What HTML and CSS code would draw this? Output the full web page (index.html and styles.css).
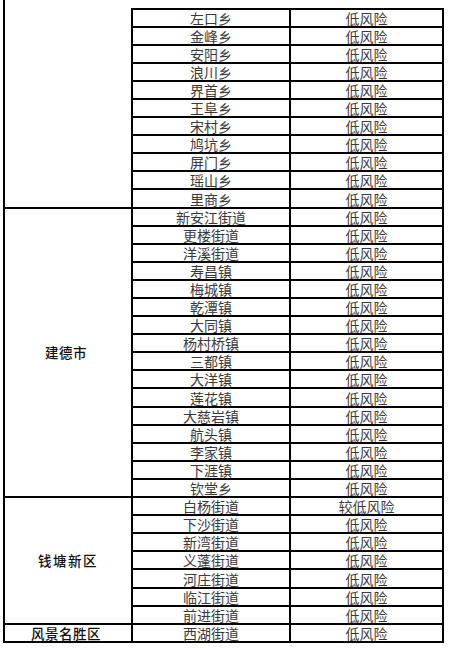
FILE: index.html
```html
<!DOCTYPE html>
<html lang="zh-CN">
<head>
<meta charset="utf-8">
<title>风险等级</title>
<link rel="stylesheet" href="styles.css">
</head>
<body>
<div class="stub"></div>
<div class="sheet">
  <div class="area span11"></div>
  <div class="town first">左口乡</div><div class="risk first">低风险</div>
  <div class="town">金峰乡</div><div class="risk">低风险</div>
  <div class="town">安阳乡</div><div class="risk">低风险</div>
  <div class="town">浪川乡</div><div class="risk">低风险</div>
  <div class="town">界首乡</div><div class="risk">低风险</div>
  <div class="town">王阜乡</div><div class="risk">低风险</div>
  <div class="town">宋村乡</div><div class="risk">低风险</div>
  <div class="town">鸠坑乡</div><div class="risk">低风险</div>
  <div class="town">屏门乡</div><div class="risk">低风险</div>
  <div class="town">瑶山乡</div><div class="risk">低风险</div>
  <div class="town">里商乡</div><div class="risk">低风险</div>

  <div class="area span16">建德市</div>
  <div class="town">新安江街道</div><div class="risk">低风险</div>
  <div class="town">更楼街道</div><div class="risk">低风险</div>
  <div class="town">洋溪街道</div><div class="risk">低风险</div>
  <div class="town">寿昌镇</div><div class="risk">低风险</div>
  <div class="town">梅城镇</div><div class="risk">低风险</div>
  <div class="town">乾潭镇</div><div class="risk">低风险</div>
  <div class="town">大同镇</div><div class="risk">低风险</div>
  <div class="town">杨村桥镇</div><div class="risk">低风险</div>
  <div class="town">三都镇</div><div class="risk">低风险</div>
  <div class="town">大洋镇</div><div class="risk">低风险</div>
  <div class="town">莲花镇</div><div class="risk">低风险</div>
  <div class="town">大慈岩镇</div><div class="risk">低风险</div>
  <div class="town">航头镇</div><div class="risk">低风险</div>
  <div class="town">李家镇</div><div class="risk">低风险</div>
  <div class="town">下涯镇</div><div class="risk">低风险</div>
  <div class="town">钦堂乡</div><div class="risk">低风险</div>

  <div class="area span7 wide">钱塘新区</div>
  <div class="town">白杨街道</div><div class="risk">较低风险</div>
  <div class="town">下沙街道</div><div class="risk">低风险</div>
  <div class="town">新湾街道</div><div class="risk">低风险</div>
  <div class="town">义蓬街道</div><div class="risk">低风险</div>
  <div class="town">河庄街道</div><div class="risk">低风险</div>
  <div class="town">临江街道</div><div class="risk">低风险</div>
  <div class="town">前进街道</div><div class="risk">低风险</div>

  <div class="area span1">风景名胜区</div>
  <div class="town">西湖街道</div><div class="risk">低风险</div>
</div>
</body>
</html>
```
FILE: styles.css
```css
html, body {
  margin: 0;
  padding: 0;
  background: #fff;
}

body {
  width: 450px;
  height: 648px;
  overflow: hidden;
  font-family: "Noto Sans CJK SC", "Noto Sans", sans-serif;
}

.stub {
  margin-left: 3px;
  width: 126px;
  height: 7.5px;
  border-left: 2px solid #000;
}

.sheet {
  margin-left: 3px;
  width: 439px;
  border-left: 2px solid #000;
  display: grid;
  grid-template-columns: 128px 158px 153px;
  grid-template-rows: 20.1px repeat(34, 18.1px);
}

.sheet > div {
  box-sizing: border-box;
  border-right: 2px solid #000;
  border-bottom: 2px solid #000;
  display: flex;
  justify-content: center;
  white-space: nowrap;
}

.area {
  grid-column: 1;
  align-items: center;
  font-size: 13.5px;
  font-weight: 500;
  color: #111;
  letter-spacing: 0.5px;
  padding-right: 4px;
}

.area.wide {
  letter-spacing: 1.5px;
  padding-right: 0;
}

.span11 { grid-row: span 11; }
.span16 { grid-row: span 16; }
.span7 { grid-row: span 7; }
.span1 { grid-row: span 1; }

.town,
.risk {
  align-items: flex-end;
  font-size: 14px;
  line-height: 15px;
  color: #3a3a3a;
}

.town { grid-column: 2; }
.risk { grid-column: 3; }

.first {
  border-top: 2px solid #000;
}
```
